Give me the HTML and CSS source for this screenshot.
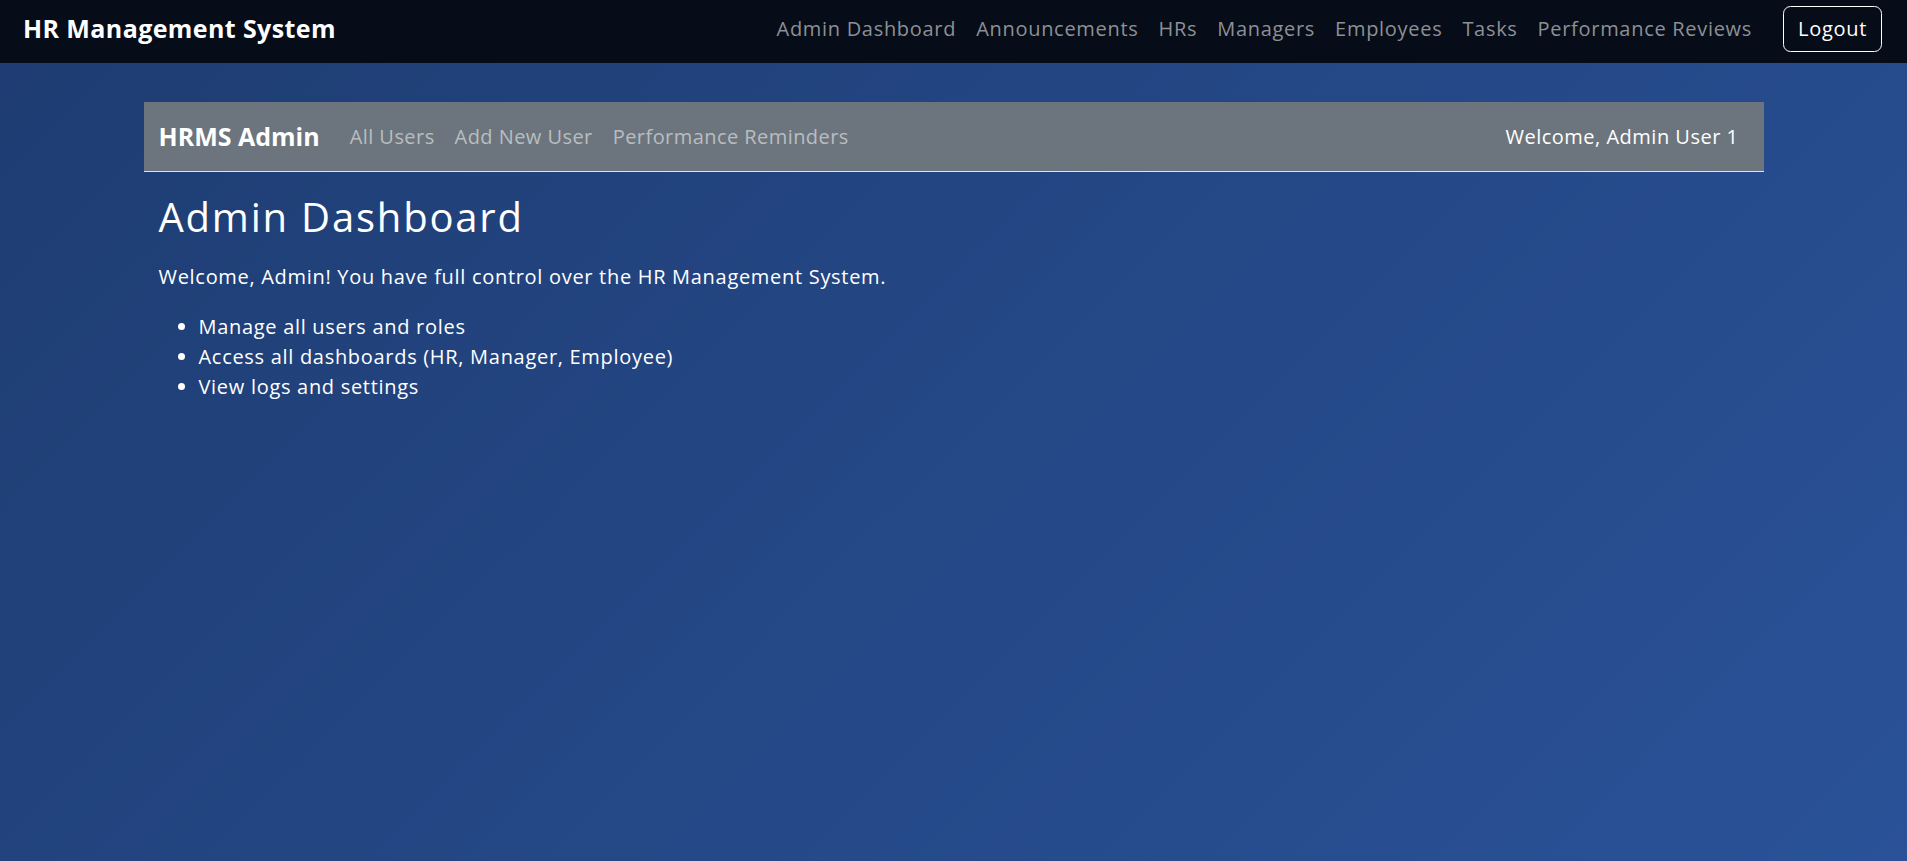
FILE: index.html
```html
<!DOCTYPE html>
<html lang="en">
<head>
<meta charset="utf-8">
<title>HR Management System</title>
<link rel="stylesheet" href="styles.css">
</head>
<body>
<header class="topbar">
  <a class="brand" href="#">HR Management System</a>
  <nav class="top-links">
    <a href="#">Admin Dashboard</a>
    <a href="#">Announcements</a>
    <a href="#">HRs</a>
    <a href="#">Managers</a>
    <a href="#">Employees</a>
    <a href="#">Tasks</a>
    <a href="#">Performance Reviews</a>
  </nav>
  <button class="logout" type="button">Logout</button>
</header>
<main class="container">
  <div class="subnav">
    <a class="sub-brand" href="#">HRMS Admin</a>
    <nav class="sub-links">
      <a href="#">All Users</a>
      <a href="#">Add New User</a>
      <a href="#">Performance Reminders</a>
    </nav>
    <span class="welcome">Welcome, Admin User 1</span>
  </div>
  <section class="content">
    <h1 class="title">Admin Dashboard</h1>
    <p class="lead">Welcome, Admin! You have full control over the HR Management System.</p>
    <ul class="features">
      <li>Manage all users and roles</li>
      <li>Access all dashboards (HR, Manager, Employee)</li>
      <li>View logs and settings</li>
    </ul>
  </section>
</main>
</body>
</html>
```

FILE: styles.css
```css
* { box-sizing: border-box; }
html, body { height: 100%; }
body {
  margin: 0;
  font-family: "Open Sans", "DejaVu Sans", sans-serif;
  font-size: 20px;
  line-height: 1.5;
  letter-spacing: 0.035em;
  color: #fff;
  background: linear-gradient(135deg, #1e3c72 0%, #2a5298 100%);
  min-height: 100vh;
}
a { text-decoration: none; }

.topbar {
  display: flex;
  align-items: center;
  height: 63px;
  padding: 0 25px 6px 23px;
  background: #060c18;
}
.brand {
  color: #fff;
  font-weight: 700;
  font-size: 25px;
  line-height: 1.2;
  letter-spacing: 0.4px;
  margin-top: -2px;
}
.top-links {
  display: flex;
  margin-left: auto;
}
.top-links a {
  color: #8d9095;
  padding: 0 10px;
}
.logout {
  margin-left: 21px;
  font: inherit;
  letter-spacing: inherit;
  color: #fff;
  background: transparent;
  border: 1px solid #fff;
  border-radius: 7.5px;
  height: 46px;
  padding: 0 14px;
}

.container {
  width: 1620px;
  margin: 39px auto 0;
}
.subnav {
  display: flex;
  align-items: center;
  height: 70px;
  padding: 0 25px 0 15px;
  background: #6c757d;
  border-bottom: 1px solid #dee2e6;
}
.sub-brand {
  color: #fff;
  font-weight: 700;
  font-size: 25px;
  letter-spacing: 0;
  margin-right: 20px;
}
.sub-links { display: flex; }
.sub-links a {
  color: #b9bdc1;
  padding: 0 10px;
  letter-spacing: 0.022em;
}
.welcome { margin-left: auto; letter-spacing: 0.025em; }

.content { padding: 0 15px; }
.title {
  margin: 21px 0 21px;
  font-size: 40px;
  font-weight: 400;
  line-height: 1.2;
  letter-spacing: 0.045em;
}
.lead { margin: 0 0 20px; }
.features {
  margin: 0;
  padding-left: 40px;
}
.features li { line-height: 1.5; }
```
